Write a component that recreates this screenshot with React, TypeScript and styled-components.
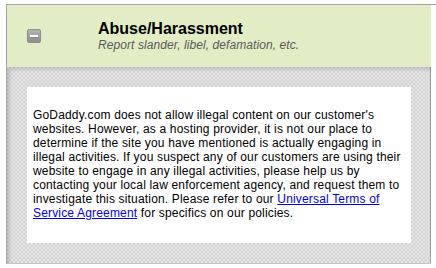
import React from "react";
import styled, { createGlobalStyle } from "styled-components";

const Global = createGlobalStyle`
  html, body { margin: 0; padding: 0; background: #ffffff; }
  body { font-family: "Liberation Sans", Arial, sans-serif; }
`;

const Frame = styled.div`
  margin: 4px 0 0 6px;
  width: 430px;
  border-top: 1px solid #a4a4a4;
  border-left: 1px solid #a4a4a4;
`;

const Header = styled.div`
  width: 424px;
  height: 62px;
  background: #e3edc5;
  display: flex;
  align-items: center;
  box-sizing: border-box;
  padding-left: 20px;
`;

const Toggle = styled.span`
  width: 14px;
  height: 14px;
  box-sizing: border-box;
  border-radius: 2px;
  border: 1px solid #8c8c8c;
  background: linear-gradient(#b4b4b4, #8e8e8e);
  display: flex;
  align-items: center;
  justify-content: center;
  margin-top: -1px;
  flex: none;
`;

const Bar = styled.span`
  width: 8px;
  height: 2px;
  background: #ffffff;
  box-shadow: 0 1px 0 rgba(0, 0, 0, 0.15);
`;

const Titles = styled.div`
  margin-left: 57px;
  display: flex;
  flex-direction: column;
`;

const Title = styled.div`
  font-weight: bold;
  font-size: 16px;
  line-height: 18px;
  color: #000;
`;

const Subtitle = styled.div`
  font-style: italic;
  font-size: 12px;
  line-height: 14px;
  letter-spacing: 0.08px;
  color: #5a5a5a;
`;

const Panel = styled.div`
  width: 424px;
  box-sizing: border-box;
  padding: 20px;
  background-color: #dedede;
  background-image: repeating-conic-gradient(#d4d4d4 0% 25%, #e4e4e4 0% 50%);
  background-size: 4px 4px;
  box-shadow: inset 3px 3px 3px rgba(0, 0, 0, 0.12), inset -1px 0 0 #9a9a9a;
  border-bottom: 1px solid #c4c4c4;
`;

const Card = styled.div`
  background: #ffffff;
  padding: 21px 6px 22px 6px;
  height: 156px;
  box-sizing: border-box;
`;

const Text = styled.p`
  margin: 0;
  font-size: 12px;
  line-height: 14px;
  letter-spacing: 0.17px;
  color: #000;
`;

const Link = styled.a`
  color: #0000ee;
  text-decoration: underline;
`;

export default function App() {
  return (
    <>
      <Global />
      <Frame>
        <Header>
          <Toggle>
            <Bar />
          </Toggle>
          <Titles>
            <Title>Abuse/Harassment</Title>
            <Subtitle>Report slander, libel, defamation, etc.</Subtitle>
          </Titles>
        </Header>
        <Panel>
          <Card>
            <Text>
              GoDaddy.com does not allow illegal content on our customer's
              websites. However, as a hosting provider, it is not our place to
              determine if the site you have mentioned is actually engaging in
              illegal activities. If you suspect any of our customers are using
              their website to engage in any illegal activities, please help us
              by contacting your local law enforcement agency, and request them
              to investigate this situation. Please refer to our{" "}
              <Link href="#">Universal Terms of Service Agreement</Link> for
              specifics on our policies.
            </Text>
          </Card>
        </Panel>
      </Frame>
    </>
  );
}
